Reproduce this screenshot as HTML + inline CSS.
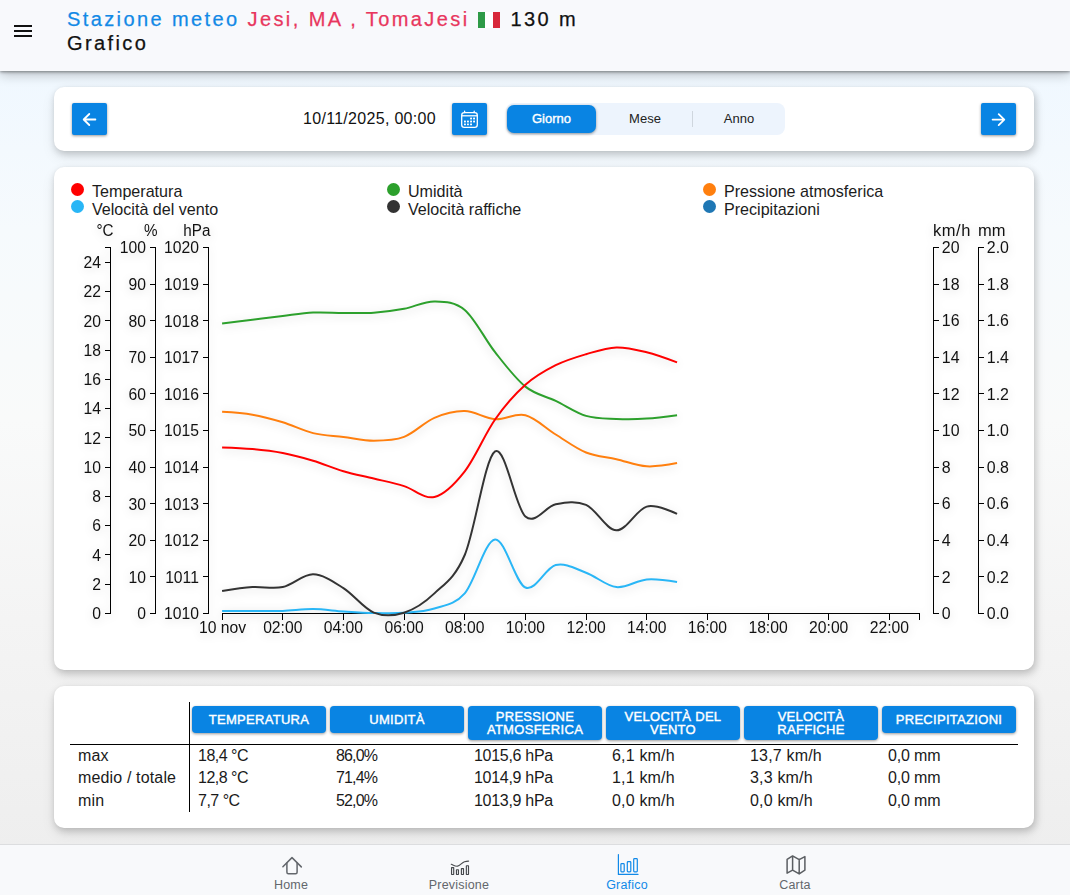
<!DOCTYPE html>
<html lang="it">
<head>
<meta charset="utf-8">
<title>Stazione meteo Jesi - Grafico</title>
<style>
*{box-sizing:border-box;margin:0;padding:0}
html,body{width:1070px;height:895px;overflow:hidden}
body{font-family:"Liberation Sans",sans-serif;color:#111;background:linear-gradient(180deg,#f0f8ff 70px,#f6fafd 230px,#f9fafa 420px,#f4f4f4 620px,#eeeeee 850px);position:relative}
.abs{position:absolute}
.header{position:absolute;left:0;top:0;width:1070px;height:71px;background:#f8f9fc;box-shadow:0 1px 3px rgba(0,0,0,.42),0 4px 11px rgba(0,0,0,.22)}
.burger{position:absolute;left:14px;top:25px;width:18px;height:12px}
.burger i{position:absolute;left:0;width:18px;height:2px;background:#111}
.title{position:absolute;left:67px;top:7px;font-size:20px;letter-spacing:2.4px;line-height:24px;white-space:nowrap;color:#111}
.title .b{color:#1289e6}.title .r{color:#e8365d}.title,.sub{-webkit-text-stroke:.25px currentColor}
.sub{position:absolute;left:67px;top:31px;font-size:20px;letter-spacing:2.4px;line-height:24px;color:#111}
.flag{display:inline-block;width:22px;height:16px;vertical-align:-2px;margin:0 2px 0 1px;background:linear-gradient(90deg,#2e9a47 0,#2e9a47 33.3%,#fff 33.3%,#fff 66.6%,#d8283a 66.6%)}
.card{position:absolute;left:54px;width:980px;background:#fff;border-radius:10px;box-shadow:1.5px 3px 7px rgba(0,0,0,.175),0 6px 14px rgba(0,0,0,.08),0 0 2px rgba(0,0,0,.04)}
.btn{position:absolute;background:#0984e3;border-radius:2px;box-shadow:0 1px 3px rgba(0,0,0,.4)}
.seg{position:absolute;left:506px;top:103px;width:279px;height:32px;border-radius:8px;background:#edf4fd}
.seg .on{position:absolute;left:1px;top:2px;width:89px;height:28px;border-radius:7px;background:#0984e3;color:#fff;font-weight:normal;-webkit-text-stroke:.4px #fff;font-size:13px;letter-spacing:0;text-align:center;line-height:28px;box-shadow:0 1px 3px rgba(0,0,0,.4)}
.seg span{position:absolute;top:0;height:32px;line-height:32px;font-size:13px;color:#222;text-align:center}
.seg .div{position:absolute;left:186px;top:8px;width:1px;height:16px;background:#cfd6de}
.date{position:absolute;left:303px;top:109px;font-size:16px;letter-spacing:.3px;line-height:20px;color:#111;white-space:nowrap}
.leg{position:absolute;font-size:16.1px;line-height:18px;color:#1c1c1c;white-space:nowrap}
.dot{position:absolute;width:13px;height:13px;border-radius:50%}
svg.chart{position:absolute;left:0;top:0;filter:drop-shadow(0 2px 5px rgba(0,0,0,.16))}
svg.chart text{font-family:"Liberation Sans",sans-serif;font-size:16.8px;fill:#111}svg.chart text.u{font-size:16.4px}svg.chart text.uk{font-size:16.5px;letter-spacing:.55px}svg.chart text.um{font-size:16.5px}
.th{position:absolute;top:706px;width:134px;height:27px;background:#0984e3;border-radius:4px;color:#fff;font-weight:normal;-webkit-text-stroke:.4px #fff;font-size:13px;letter-spacing:.3px;text-align:center;line-height:28.6px;box-shadow:0 1px 3px rgba(0,0,0,.4);white-space:nowrap}
.th.two{height:34px;line-height:13px;padding-top:4px}
.td{position:absolute;font-size:16px;line-height:20px;color:#1a1a1a;white-space:nowrap}
.nav{position:absolute;left:0;top:844px;width:1070px;height:51px;background:#f8f9fb;border-top:1px solid #dcdddf}
.nl{position:absolute;top:878px;width:120px;text-align:center;font-size:12.5px;line-height:15px;color:#63676c;letter-spacing:.2px}
.nl.act{color:#1089e8}
</style>
</head>
<body>
<div class="header">
  <div class="burger"><i style="top:0"></i><i style="top:5px"></i><i style="top:10px"></i></div>
  <div class="title"><span class="b">Stazione meteo</span> <span class="r">Jesi, MA , TomaJesi</span> <span class="flag"></span> 130 m</div>
  <div class="sub">Grafico</div>
</div>

<div class="card" style="top:87px;height:64px"></div>
<div class="btn" style="left:72px;top:103px;width:35px;height:32px">
  <svg width="35" height="32" viewBox="0 0 35 32"><path d="M23.400 16.500H11.800M17.300 11l-5.600 5.500 5.600 5.500" fill="none" stroke="#fff" stroke-width="1.8" stroke-linecap="round" stroke-linejoin="round"/></svg>
</div>
<div class="date">10/11/2025, 00:00</div>
<div class="btn" style="left:452px;top:103px;width:35px;height:32px">
  <svg width="35" height="32" viewBox="0 0 35 32"><rect x="9.700" y="9.600" width="15.600" height="14.800" rx="2.600" fill="none" stroke="#fff" stroke-width="1.3"/><path d="M9.700 12.800h15.600" stroke="#fff" stroke-width="1.3"/><path d="M12.600 8.200v1.400M22.200 8.200v1.400" stroke="#fff" stroke-width="1.3" stroke-linecap="round"/><g fill="#fff"><rect x="18.1" y="14.6" width="1.9" height="1.9" rx=".4"/><rect x="21.1" y="14.6" width="1.9" height="1.9" rx=".4"/><rect x="12.0" y="17.6" width="1.9" height="1.9" rx=".4"/><rect x="15.0" y="17.6" width="1.9" height="1.9" rx=".4"/><rect x="18.1" y="17.6" width="1.9" height="1.9" rx=".4"/><rect x="21.1" y="17.6" width="1.9" height="1.9" rx=".4"/><rect x="12.0" y="20.4" width="1.9" height="1.9" rx=".4"/><rect x="15.0" y="20.4" width="1.9" height="1.9" rx=".4"/><rect x="18.1" y="20.4" width="1.9" height="1.9" rx=".4"/></g></svg>
</div>
<div class="seg"><div class="on">Giorno</div><span style="left:94px;width:90px">Mese</span><div class="div"></div><span style="left:188px;width:90px">Anno</span></div>
<div class="btn" style="left:981px;top:103px;width:35px;height:32px">
  <svg width="35" height="32" viewBox="0 0 35 32"><path d="M11.600 16.600H23.200M17.700 11.100l5.600 5.500-5.600 5.500" fill="none" stroke="#fff" stroke-width="1.8" stroke-linecap="round" stroke-linejoin="round"/></svg>
</div>

<div class="card" style="top:167px;height:503px"></div>
<div class="dot" style="left:70.5px;top:183.4px;background:#ff0000"></div><div class="leg" style="left:92px;top:182.3px">Temperatura</div>
<div class="dot" style="left:70.5px;top:200.4px;background:#29b6f6"></div><div class="leg" style="left:92px;top:199.5px">Velocità del vento</div>
<div class="dot" style="left:386.5px;top:183.4px;background:#2ca02c"></div><div class="leg" style="left:408px;top:182.3px">Umidità</div>
<div class="dot" style="left:386.5px;top:200.4px;background:#333"></div><div class="leg" style="left:408px;top:199.5px">Velocità raffiche</div>
<div class="dot" style="left:702.5px;top:183.4px;background:#ff7f0e"></div><div class="leg" style="left:724px;top:182.3px">Pressione atmosferica</div>
<div class="dot" style="left:702.5px;top:200.4px;background:#1f77b4"></div><div class="leg" style="left:724px;top:199.5px">Precipitazioni</div>

<div class="card" style="top:686px;height:142px"></div>
<div class="abs" style="left:189px;top:702px;width:1px;height:110px;background:#000"></div>
<div class="abs" style="left:70px;top:744px;width:948px;height:1px;background:#000"></div>
<div class="th" style="left:192px">TEMPERATURA</div>
<div class="th" style="left:330px">UMIDITÀ</div>
<div class="th two" style="left:468px">PRESSIONE<br>ATMOSFERICA</div>
<div class="th two" style="left:606px">VELOCITÀ DEL<br>VENTO</div>
<div class="th two" style="left:744px">VELOCITÀ<br>RAFFICHE</div>
<div class="th" style="left:882px">PRECIPITAZIONI</div>

<div class="td" style="left:78px;letter-spacing:.15px;top:746px">max</div>
<div class="td" style="left:78px;letter-spacing:.15px;top:768px">medio / totale</div>
<div class="td" style="left:78px;letter-spacing:.15px;top:791px">min</div>
<div class="td" style="left:198px;letter-spacing:-.5px;top:746px">18,4 °C</div><div class="td" style="left:198px;letter-spacing:-.5px;top:768px">12,8 °C</div><div class="td" style="left:198px;letter-spacing:-.5px;top:791px">7,7 °C</div>
<div class="td" style="left:336px;letter-spacing:-.85px;top:746px">86,0%</div><div class="td" style="left:336px;letter-spacing:-.85px;top:768px">71,4%</div><div class="td" style="left:336px;letter-spacing:-.85px;top:791px">52,0%</div>
<div class="td" style="left:474px;letter-spacing:-.3px;top:746px">1015,6 hPa</div><div class="td" style="left:474px;letter-spacing:-.3px;top:768px">1014,9 hPa</div><div class="td" style="left:474px;letter-spacing:-.3px;top:791px">1013,9 hPa</div>
<div class="td" style="left:612px;letter-spacing:.18px;top:746px">6,1 km/h</div><div class="td" style="left:612px;letter-spacing:.18px;top:768px">1,1 km/h</div><div class="td" style="left:612px;letter-spacing:.18px;top:791px">0,0 km/h</div>
<div class="td" style="left:750px;letter-spacing:.18px;top:746px">13,7 km/h</div><div class="td" style="left:750px;letter-spacing:.18px;top:768px">3,3 km/h</div><div class="td" style="left:750px;letter-spacing:.18px;top:791px">0,0 km/h</div>
<div class="td" style="left:888px;letter-spacing:-.15px;top:746px">0,0 mm</div><div class="td" style="left:888px;letter-spacing:-.15px;top:768px">0,0 mm</div><div class="td" style="left:888px;letter-spacing:-.15px;top:791px">0,0 mm</div>

<div class="nav"></div>
<svg class="abs" style="left:275px;top:850px" width="36" height="30" viewBox="0 0 36 30"><g fill="none" stroke="#63676c" stroke-width="1.5" stroke-linecap="round" stroke-linejoin="round"><path d="M7.900 16.700L17 7.600L26.300 16.900"/><path d="M11.900 13V22.300a1.500 1.500 0 0 0 1.500 1.500h7.200a1.500 1.500 0 0 0 1.500-1.500V13"/></g></svg>
<div class="nl" style="left:231px">Home</div>
<svg class="abs" style="left:443px;top:850px" width="36" height="30" viewBox="0 0 36 30"><path d="M8.300 14.300C10.500 15.200 12.500 16.500 14.500 16.200C17 15.800 19 12.500 21.500 11.700C23 11.200 24.500 11.100 25.600 11.100" fill="none" stroke="#4a4d50" stroke-width="1.2" stroke-linecap="round"/><g fill="none" stroke="#45484c" stroke-width="1.15"><rect x="8.550" y="17.650" width="2.150" height="6.800" rx=".15"/><rect x="13.450" y="19.750" width="2" height="4.700" rx=".15"/><rect x="18.400" y="18.650" width="2.100" height="5.800" rx=".15"/><rect x="23.350" y="15.750" width="2.150" height="8.700" rx=".15"/></g></svg>
<div class="nl" style="left:399px">Previsione</div>
<svg class="abs" style="left:609px;top:850px" width="36" height="30" viewBox="0 0 36 30"><g fill="none" stroke="#1089e8" stroke-width="1.2" stroke-linecap="round" stroke-linejoin="round"><path d="M9.400 4.600V24.400H29"/><rect x="11.900" y="13.600" width="3.300" height="8.200" rx=".8"/><rect x="18.300" y="11.700" width="3.500" height="10.100" rx=".8"/><rect x="24.700" y="8.700" width="3.600" height="13.100" rx=".8"/></g></svg>
<div class="nl act" style="left:567px">Grafico</div>
<svg class="abs" style="left:777px;top:850px" width="36" height="30" viewBox="0 0 36 30"><path d="M10.100 9.400L15.600 5.900L22.200 9.600L27.900 6.600V20.200L22.200 23.900L15.600 20.200L10.100 23.200ZM15.600 5.900V20.200M22.200 9.600V23.900" fill="none" stroke="#5b5e62" stroke-width="1.5" stroke-linejoin="round" stroke-linecap="round"/></svg>
<div class="nl" style="left:735px">Carta</div>

<svg class="chart" width="1070" height="895" viewBox="0 0 1070 895">
<g class="ax">
<path shape-rendering="crispEdges" d="M104.5,247.5H110.5V613.5H104.5" fill="none" stroke="#000" stroke-width="1"/>
<text class="l" transform="translate(100.90 613.50) scale(0.935 1)" text-anchor="end" dy="0.345em">0</text>
<line shape-rendering="crispEdges" x1="104.5" x2="110.5" y1="584.2" y2="584.2" stroke="#000"/>
<text class="l" transform="translate(100.90 584.22) scale(0.935 1)" text-anchor="end" dy="0.345em">2</text>
<line shape-rendering="crispEdges" x1="104.5" x2="110.5" y1="554.9" y2="554.9" stroke="#000"/>
<text class="l" transform="translate(100.90 554.94) scale(0.935 1)" text-anchor="end" dy="0.345em">4</text>
<line shape-rendering="crispEdges" x1="104.5" x2="110.5" y1="525.7" y2="525.7" stroke="#000"/>
<text class="l" transform="translate(100.90 525.66) scale(0.935 1)" text-anchor="end" dy="0.345em">6</text>
<line shape-rendering="crispEdges" x1="104.5" x2="110.5" y1="496.4" y2="496.4" stroke="#000"/>
<text class="l" transform="translate(100.90 496.38) scale(0.935 1)" text-anchor="end" dy="0.345em">8</text>
<line shape-rendering="crispEdges" x1="104.5" x2="110.5" y1="467.1" y2="467.1" stroke="#000"/>
<text class="l" transform="translate(100.90 467.10) scale(0.935 1)" text-anchor="end" dy="0.345em">10</text>
<line shape-rendering="crispEdges" x1="104.5" x2="110.5" y1="437.8" y2="437.8" stroke="#000"/>
<text class="l" transform="translate(100.90 437.82) scale(0.935 1)" text-anchor="end" dy="0.345em">12</text>
<line shape-rendering="crispEdges" x1="104.5" x2="110.5" y1="408.5" y2="408.5" stroke="#000"/>
<text class="l" transform="translate(100.90 408.54) scale(0.935 1)" text-anchor="end" dy="0.345em">14</text>
<line shape-rendering="crispEdges" x1="104.5" x2="110.5" y1="379.3" y2="379.3" stroke="#000"/>
<text class="l" transform="translate(100.90 379.26) scale(0.935 1)" text-anchor="end" dy="0.345em">16</text>
<line shape-rendering="crispEdges" x1="104.5" x2="110.5" y1="350.0" y2="350.0" stroke="#000"/>
<text class="l" transform="translate(100.90 349.98) scale(0.935 1)" text-anchor="end" dy="0.345em">18</text>
<line shape-rendering="crispEdges" x1="104.5" x2="110.5" y1="320.7" y2="320.7" stroke="#000"/>
<text class="l" transform="translate(100.90 320.70) scale(0.935 1)" text-anchor="end" dy="0.345em">20</text>
<line shape-rendering="crispEdges" x1="104.5" x2="110.5" y1="291.4" y2="291.4" stroke="#000"/>
<text class="l" transform="translate(100.90 291.42) scale(0.935 1)" text-anchor="end" dy="0.345em">22</text>
<line shape-rendering="crispEdges" x1="104.5" x2="110.5" y1="262.1" y2="262.1" stroke="#000"/>
<text class="l" transform="translate(100.90 262.14) scale(0.935 1)" text-anchor="end" dy="0.345em">24</text>
<text class="u" transform="translate(113.50 235.60) scale(0.930 1)" text-anchor="end">°C</text>
<path shape-rendering="crispEdges" d="M149.5,247.5H155.5V613.5H149.5" fill="none" stroke="#000" stroke-width="1"/>
<text class="l" transform="translate(145.90 613.50) scale(0.935 1)" text-anchor="end" dy="0.345em">0</text>
<line shape-rendering="crispEdges" x1="149.5" x2="155.5" y1="576.9" y2="576.9" stroke="#000"/>
<text class="l" transform="translate(145.90 576.90) scale(0.935 1)" text-anchor="end" dy="0.345em">10</text>
<line shape-rendering="crispEdges" x1="149.5" x2="155.5" y1="540.3" y2="540.3" stroke="#000"/>
<text class="l" transform="translate(145.90 540.30) scale(0.935 1)" text-anchor="end" dy="0.345em">20</text>
<line shape-rendering="crispEdges" x1="149.5" x2="155.5" y1="503.7" y2="503.7" stroke="#000"/>
<text class="l" transform="translate(145.90 503.70) scale(0.935 1)" text-anchor="end" dy="0.345em">30</text>
<line shape-rendering="crispEdges" x1="149.5" x2="155.5" y1="467.1" y2="467.1" stroke="#000"/>
<text class="l" transform="translate(145.90 467.10) scale(0.935 1)" text-anchor="end" dy="0.345em">40</text>
<line shape-rendering="crispEdges" x1="149.5" x2="155.5" y1="430.5" y2="430.5" stroke="#000"/>
<text class="l" transform="translate(145.90 430.50) scale(0.935 1)" text-anchor="end" dy="0.345em">50</text>
<line shape-rendering="crispEdges" x1="149.5" x2="155.5" y1="393.9" y2="393.9" stroke="#000"/>
<text class="l" transform="translate(145.90 393.90) scale(0.935 1)" text-anchor="end" dy="0.345em">60</text>
<line shape-rendering="crispEdges" x1="149.5" x2="155.5" y1="357.3" y2="357.3" stroke="#000"/>
<text class="l" transform="translate(145.90 357.30) scale(0.935 1)" text-anchor="end" dy="0.345em">70</text>
<line shape-rendering="crispEdges" x1="149.5" x2="155.5" y1="320.7" y2="320.7" stroke="#000"/>
<text class="l" transform="translate(145.90 320.70) scale(0.935 1)" text-anchor="end" dy="0.345em">80</text>
<line shape-rendering="crispEdges" x1="149.5" x2="155.5" y1="284.1" y2="284.1" stroke="#000"/>
<text class="l" transform="translate(145.90 284.10) scale(0.935 1)" text-anchor="end" dy="0.345em">90</text>
<text class="l" transform="translate(145.90 247.50) scale(0.935 1)" text-anchor="end" dy="0.345em">100</text>
<text class="u" transform="translate(157.50 235.60) scale(0.930 1)" text-anchor="end">%</text>
<path shape-rendering="crispEdges" d="M202.5,247.5H208.5V613.5H202.5" fill="none" stroke="#000" stroke-width="1"/>
<text class="l" transform="translate(198.90 613.50) scale(0.935 1)" text-anchor="end" dy="0.345em">1010</text>
<line shape-rendering="crispEdges" x1="202.5" x2="208.5" y1="576.9" y2="576.9" stroke="#000"/>
<text class="l" transform="translate(198.90 576.90) scale(0.935 1)" text-anchor="end" dy="0.345em">1011</text>
<line shape-rendering="crispEdges" x1="202.5" x2="208.5" y1="540.3" y2="540.3" stroke="#000"/>
<text class="l" transform="translate(198.90 540.30) scale(0.935 1)" text-anchor="end" dy="0.345em">1012</text>
<line shape-rendering="crispEdges" x1="202.5" x2="208.5" y1="503.7" y2="503.7" stroke="#000"/>
<text class="l" transform="translate(198.90 503.70) scale(0.935 1)" text-anchor="end" dy="0.345em">1013</text>
<line shape-rendering="crispEdges" x1="202.5" x2="208.5" y1="467.1" y2="467.1" stroke="#000"/>
<text class="l" transform="translate(198.90 467.10) scale(0.935 1)" text-anchor="end" dy="0.345em">1014</text>
<line shape-rendering="crispEdges" x1="202.5" x2="208.5" y1="430.5" y2="430.5" stroke="#000"/>
<text class="l" transform="translate(198.90 430.50) scale(0.935 1)" text-anchor="end" dy="0.345em">1015</text>
<line shape-rendering="crispEdges" x1="202.5" x2="208.5" y1="393.9" y2="393.9" stroke="#000"/>
<text class="l" transform="translate(198.90 393.90) scale(0.935 1)" text-anchor="end" dy="0.345em">1016</text>
<line shape-rendering="crispEdges" x1="202.5" x2="208.5" y1="357.3" y2="357.3" stroke="#000"/>
<text class="l" transform="translate(198.90 357.30) scale(0.935 1)" text-anchor="end" dy="0.345em">1017</text>
<line shape-rendering="crispEdges" x1="202.5" x2="208.5" y1="320.7" y2="320.7" stroke="#000"/>
<text class="l" transform="translate(198.90 320.70) scale(0.935 1)" text-anchor="end" dy="0.345em">1018</text>
<line shape-rendering="crispEdges" x1="202.5" x2="208.5" y1="284.1" y2="284.1" stroke="#000"/>
<text class="l" transform="translate(198.90 284.10) scale(0.935 1)" text-anchor="end" dy="0.345em">1019</text>
<text class="l" transform="translate(198.90 247.50) scale(0.935 1)" text-anchor="end" dy="0.345em">1020</text>
<text class="u" transform="translate(210.50 235.60) scale(0.930 1)" text-anchor="end">hPa</text>
<path shape-rendering="crispEdges" d="M939.0,247.5H933.5V613.5H939.0" fill="none" stroke="#000" stroke-width="1"/>
<text class="l" transform="translate(941.80 613.50) scale(0.950 1)" text-anchor="start" dy="0.345em">0</text>
<line shape-rendering="crispEdges" x1="933.5" x2="939.0" y1="576.9" y2="576.9" stroke="#000"/>
<text class="l" transform="translate(941.80 576.90) scale(0.950 1)" text-anchor="start" dy="0.345em">2</text>
<line shape-rendering="crispEdges" x1="933.5" x2="939.0" y1="540.3" y2="540.3" stroke="#000"/>
<text class="l" transform="translate(941.80 540.30) scale(0.950 1)" text-anchor="start" dy="0.345em">4</text>
<line shape-rendering="crispEdges" x1="933.5" x2="939.0" y1="503.7" y2="503.7" stroke="#000"/>
<text class="l" transform="translate(941.80 503.70) scale(0.950 1)" text-anchor="start" dy="0.345em">6</text>
<line shape-rendering="crispEdges" x1="933.5" x2="939.0" y1="467.1" y2="467.1" stroke="#000"/>
<text class="l" transform="translate(941.80 467.10) scale(0.950 1)" text-anchor="start" dy="0.345em">8</text>
<line shape-rendering="crispEdges" x1="933.5" x2="939.0" y1="430.5" y2="430.5" stroke="#000"/>
<text class="l" transform="translate(941.80 430.50) scale(0.950 1)" text-anchor="start" dy="0.345em">10</text>
<line shape-rendering="crispEdges" x1="933.5" x2="939.0" y1="393.9" y2="393.9" stroke="#000"/>
<text class="l" transform="translate(941.80 393.90) scale(0.950 1)" text-anchor="start" dy="0.345em">12</text>
<line shape-rendering="crispEdges" x1="933.5" x2="939.0" y1="357.3" y2="357.3" stroke="#000"/>
<text class="l" transform="translate(941.80 357.30) scale(0.950 1)" text-anchor="start" dy="0.345em">14</text>
<line shape-rendering="crispEdges" x1="933.5" x2="939.0" y1="320.7" y2="320.7" stroke="#000"/>
<text class="l" transform="translate(941.80 320.70) scale(0.950 1)" text-anchor="start" dy="0.345em">16</text>
<line shape-rendering="crispEdges" x1="933.5" x2="939.0" y1="284.1" y2="284.1" stroke="#000"/>
<text class="l" transform="translate(941.80 284.10) scale(0.950 1)" text-anchor="start" dy="0.345em">18</text>
<text class="l" transform="translate(941.80 247.50) scale(0.950 1)" text-anchor="start" dy="0.345em">20</text>
<text class="uk" transform="translate(933.00 235.60) scale(1.000 1)" text-anchor="start">km/h</text>
<path shape-rendering="crispEdges" d="M984.0,247.5H978.5V613.5H984.0" fill="none" stroke="#000" stroke-width="1"/>
<text class="l" transform="translate(986.80 613.50) scale(0.950 1)" text-anchor="start" dy="0.345em">0.0</text>
<line shape-rendering="crispEdges" x1="978.5" x2="984.0" y1="576.9" y2="576.9" stroke="#000"/>
<text class="l" transform="translate(986.80 576.90) scale(0.950 1)" text-anchor="start" dy="0.345em">0.2</text>
<line shape-rendering="crispEdges" x1="978.5" x2="984.0" y1="540.3" y2="540.3" stroke="#000"/>
<text class="l" transform="translate(986.80 540.30) scale(0.950 1)" text-anchor="start" dy="0.345em">0.4</text>
<line shape-rendering="crispEdges" x1="978.5" x2="984.0" y1="503.7" y2="503.7" stroke="#000"/>
<text class="l" transform="translate(986.80 503.70) scale(0.950 1)" text-anchor="start" dy="0.345em">0.6</text>
<line shape-rendering="crispEdges" x1="978.5" x2="984.0" y1="467.1" y2="467.1" stroke="#000"/>
<text class="l" transform="translate(986.80 467.10) scale(0.950 1)" text-anchor="start" dy="0.345em">0.8</text>
<line shape-rendering="crispEdges" x1="978.5" x2="984.0" y1="430.5" y2="430.5" stroke="#000"/>
<text class="l" transform="translate(986.80 430.50) scale(0.950 1)" text-anchor="start" dy="0.345em">1.0</text>
<line shape-rendering="crispEdges" x1="978.5" x2="984.0" y1="393.9" y2="393.9" stroke="#000"/>
<text class="l" transform="translate(986.80 393.90) scale(0.950 1)" text-anchor="start" dy="0.345em">1.2</text>
<line shape-rendering="crispEdges" x1="978.5" x2="984.0" y1="357.3" y2="357.3" stroke="#000"/>
<text class="l" transform="translate(986.80 357.30) scale(0.950 1)" text-anchor="start" dy="0.345em">1.4</text>
<line shape-rendering="crispEdges" x1="978.5" x2="984.0" y1="320.7" y2="320.7" stroke="#000"/>
<text class="l" transform="translate(986.80 320.70) scale(0.950 1)" text-anchor="start" dy="0.345em">1.6</text>
<line shape-rendering="crispEdges" x1="978.5" x2="984.0" y1="284.1" y2="284.1" stroke="#000"/>
<text class="l" transform="translate(986.80 284.10) scale(0.950 1)" text-anchor="start" dy="0.345em">1.8</text>
<text class="l" transform="translate(986.80 247.50) scale(0.950 1)" text-anchor="start" dy="0.345em">2.0</text>
<text class="um" transform="translate(978.00 235.60) scale(1.000 1)" text-anchor="start">mm</text>
<path shape-rendering="crispEdges" d="M222.5,619.5V613.5H919.5V619.5" fill="none" stroke="#000"/>
<line shape-rendering="crispEdges" x1="282.8" x2="282.8" y1="613.5" y2="619.5" stroke="#000"/>
<text class="l" transform="translate(282.76 633.00) scale(0.935 1)" text-anchor="middle">02:00</text>
<line shape-rendering="crispEdges" x1="343.4" x2="343.4" y1="613.5" y2="619.5" stroke="#000"/>
<text class="l" transform="translate(343.42 633.00) scale(0.935 1)" text-anchor="middle">04:00</text>
<line shape-rendering="crispEdges" x1="404.1" x2="404.1" y1="613.5" y2="619.5" stroke="#000"/>
<text class="l" transform="translate(404.08 633.00) scale(0.935 1)" text-anchor="middle">06:00</text>
<line shape-rendering="crispEdges" x1="464.7" x2="464.7" y1="613.5" y2="619.5" stroke="#000"/>
<text class="l" transform="translate(464.74 633.00) scale(0.935 1)" text-anchor="middle">08:00</text>
<line shape-rendering="crispEdges" x1="525.4" x2="525.4" y1="613.5" y2="619.5" stroke="#000"/>
<text class="l" transform="translate(525.40 633.00) scale(0.935 1)" text-anchor="middle">10:00</text>
<line shape-rendering="crispEdges" x1="586.1" x2="586.1" y1="613.5" y2="619.5" stroke="#000"/>
<text class="l" transform="translate(586.06 633.00) scale(0.935 1)" text-anchor="middle">12:00</text>
<line shape-rendering="crispEdges" x1="646.7" x2="646.7" y1="613.5" y2="619.5" stroke="#000"/>
<text class="l" transform="translate(646.72 633.00) scale(0.935 1)" text-anchor="middle">14:00</text>
<line shape-rendering="crispEdges" x1="707.4" x2="707.4" y1="613.5" y2="619.5" stroke="#000"/>
<text class="l" transform="translate(707.38 633.00) scale(0.935 1)" text-anchor="middle">16:00</text>
<line shape-rendering="crispEdges" x1="768.0" x2="768.0" y1="613.5" y2="619.5" stroke="#000"/>
<text class="l" transform="translate(768.04 633.00) scale(0.935 1)" text-anchor="middle">18:00</text>
<line shape-rendering="crispEdges" x1="828.7" x2="828.7" y1="613.5" y2="619.5" stroke="#000"/>
<text class="l" transform="translate(828.70 633.00) scale(0.935 1)" text-anchor="middle">20:00</text>
<line shape-rendering="crispEdges" x1="889.4" x2="889.4" y1="613.5" y2="619.5" stroke="#000"/>
<text class="l" transform="translate(889.36 633.00) scale(0.935 1)" text-anchor="middle">22:00</text>
<text class="l" transform="translate(222.50 633.00) scale(0.935 1)" text-anchor="middle">10 nov</text>
</g>
<g class="ln">
<path d="M222.10,411.80C222.10,411.80 242.32,412.95 252.43,414.70C262.54,416.45 272.65,419.23 282.76,422.30C292.87,425.37 302.98,430.67 313.09,433.10C323.20,435.53 333.31,435.63 343.42,436.90C353.53,438.17 363.64,440.70 373.75,440.70C383.86,440.70 393.97,440.70 404.08,436.90C414.19,433.10 424.30,422.20 434.41,417.90C444.52,413.60 454.63,410.88 464.74,411.10C474.85,411.32 484.96,418.50 495.07,419.20C505.18,419.90 515.29,412.75 525.40,415.30C535.51,417.85 545.62,428.30 555.73,434.50C565.84,440.70 575.95,448.38 586.06,452.50C596.17,456.62 606.28,456.90 616.39,459.20C626.50,461.50 636.61,465.65 646.72,466.30C656.83,466.95 677.05,463.10 677.05,463.10" fill="none" stroke="#ff7f0e" stroke-width="2" stroke-linecap="butt" stroke-linejoin="round"/>
<path d="M222.10,323.60C222.10,323.60 242.32,321.07 252.43,319.80C262.54,318.53 272.65,317.20 282.76,316.00C292.87,314.80 302.98,313.12 313.09,312.60C323.20,312.08 333.31,312.88 343.42,312.90C353.53,312.92 363.64,313.38 373.75,312.70C383.86,312.02 393.97,310.68 404.08,308.80C414.19,306.92 424.30,301.22 434.41,301.40C444.52,301.58 454.63,301.43 464.74,309.90C474.85,318.37 484.96,339.42 495.07,352.20C505.18,364.98 515.29,378.48 525.40,386.60C535.51,394.72 545.62,396.02 555.73,400.90C565.84,405.78 575.95,412.90 586.06,415.90C596.17,418.90 606.28,418.45 616.39,418.90C626.50,419.35 636.61,419.22 646.72,418.60C656.83,417.98 677.05,415.20 677.05,415.20" fill="none" stroke="#2ca02c" stroke-width="2" stroke-linecap="butt" stroke-linejoin="round"/>
<path d="M222.10,611.00C222.10,611.00 242.32,611.02 252.43,611.00C262.54,610.98 272.65,611.22 282.76,610.90C292.87,610.58 302.98,609.02 313.09,609.10C323.20,609.18 333.31,610.75 343.42,611.40C353.53,612.05 363.64,612.77 373.75,613.00C383.86,613.23 393.97,613.55 404.08,612.80C414.19,612.05 424.30,611.73 434.41,608.50C444.52,605.27 454.63,604.88 464.74,593.40C474.85,581.92 484.96,540.58 495.07,539.60C505.18,538.62 515.29,583.27 525.40,587.50C535.51,591.73 545.62,567.47 555.73,565.00C565.84,562.53 575.95,569.02 586.06,572.70C596.17,576.38 606.28,585.98 616.39,587.10C626.50,588.22 636.61,580.27 646.72,579.40C656.83,578.53 677.05,581.90 677.05,581.90" fill="none" stroke="#29b6f6" stroke-width="2" stroke-linecap="butt" stroke-linejoin="round"/>
<path d="M222.10,591.00C222.10,591.00 242.32,587.75 252.43,587.10C262.54,586.45 272.65,589.23 282.76,587.10C292.87,584.97 302.98,574.13 313.09,574.30C323.20,574.47 333.31,581.72 343.42,588.10C353.53,594.48 363.64,608.50 373.75,612.60C383.86,616.70 393.97,615.90 404.08,612.70C414.19,609.50 424.30,603.02 434.41,593.40C444.52,583.78 454.63,578.67 464.74,555.00C474.85,531.33 484.96,457.82 495.07,451.40C505.18,444.98 515.29,507.68 525.40,516.50C535.51,525.32 545.62,506.23 555.73,504.30C565.84,502.37 575.95,500.57 586.06,504.90C596.17,509.23 606.28,530.02 616.39,530.30C626.50,530.58 636.61,509.33 646.72,506.60C656.83,503.87 677.05,513.90 677.05,513.90" fill="none" stroke="#333333" stroke-width="2" stroke-linecap="butt" stroke-linejoin="round"/>
<path d="M222.10,447.50C222.10,447.50 242.32,448.17 252.43,449.10C262.54,450.03 272.65,451.15 282.76,453.10C292.87,455.05 302.98,457.78 313.09,460.80C323.20,463.82 333.31,468.25 343.42,471.20C353.53,474.15 363.64,476.02 373.75,478.50C383.86,480.98 393.97,483.02 404.08,486.10C414.19,489.18 424.30,499.47 434.41,497.00C444.52,494.53 454.63,484.22 464.74,471.30C474.85,458.38 484.96,433.92 495.07,419.50C505.18,405.08 515.29,393.85 525.40,384.80C535.51,375.75 545.62,370.30 555.73,365.20C565.84,360.10 575.95,357.17 586.06,354.20C596.17,351.23 606.28,347.72 616.39,347.40C626.50,347.08 636.61,349.80 646.72,352.30C656.83,354.80 677.05,362.40 677.05,362.40" fill="none" stroke="#ff0000" stroke-width="2" stroke-linecap="butt" stroke-linejoin="round"/>
</g>
</svg>
</body>
</html>
